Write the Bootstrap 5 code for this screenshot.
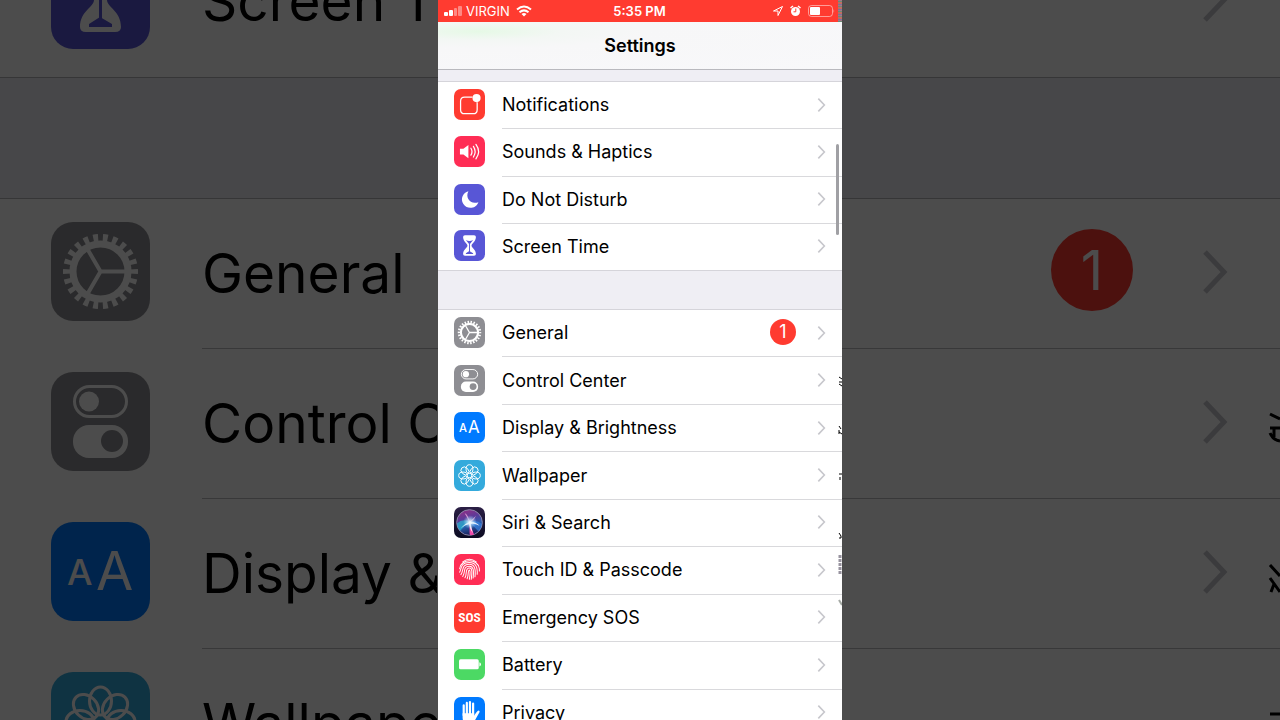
<!DOCTYPE html>
<html lang="en">
<head>
<meta charset="utf-8">
<meta name="viewport" content="width=device-width, initial-scale=1">
<title>Settings</title>
<link href="https://cdn.jsdelivr.net/npm/bootstrap@5.3.0/dist/css/bootstrap.min.css" rel="stylesheet">
<style>
  body { font-family: Inter, "Liberation Sans", sans-serif; background: #fff; color: #000; }
  .stage { height: 100vh; }

  /* Enlarged, dimmed list behind the phone */
  .backdrop { background: #fff; z-index: 0; }
  .backdrop::after { content: ""; position: absolute; inset: 0; background: rgba(0, 0, 0, .7); }
  .big-clip { height: 78px; }
  .big-gap { height: 121px; background: #efeef4; }
  .big-row { height: 150px; flex: none; padding-left: 51px; gap: 52px; }
  .big-row .tile { width: 99px; height: 99px; margin-bottom: 5px; }
  .big-body { border-bottom: 1px solid #bcbcc0; padding-right: 52px; gap: 69px; font-size: 55px; line-height: 68px; white-space: nowrap; }
  .big-label { max-width: calc(50vw - 405px); margin-bottom: 2px; }
  .big-edge { border-bottom: 1px solid #b4b4b8; }
  .big-edge .big-body { border-bottom: 0; }
  .big-row .chev { width: 26px; height: 44px; margin-bottom: 4px; }
  .big-badge { width: 82px; height: 82px; margin-bottom: 8px; background: #ff3b30; color: #fff; line-height: 82px; }

  /* Phone */
  .phone { max-width: 404px; z-index: 1; background: #fff; }
  .status { background: #ff3b30; color: #fff; height: 22px; font-size: 13px; line-height: 22px; padding: 0 2px 0 6px; }
  .status-icons { gap: 7px; padding-right: 5px; }
  .title-bar { height: 48px; background: radial-gradient(ellipse at 10% 20%, #e6f9e6 0, #f3f7f4 16%, #f7f7f8 32%, #f8f8fa 100%); border-bottom: 1px solid #b9b9be; }
  .title-bar h1 { font-size: 18px; line-height: 24px; font-weight: 600; }
  .spacer-sm { height: 11px; background: #efeef4; flex: none; }
  .spacer-lg { height: 38px; background: #efeef4; flex: none; }
  .rows { display: grid; grid-auto-rows: 1fr; flex: none; border-top: 1px solid #d5d4da; }
  .rows-top { height: 190px; }
  .rows-main { height: 428px; }
  .set-row { color: #000; padding-left: 16px; gap: 17px; }
  .set-row .tile { width: 31px; height: 31px; margin-bottom: 2px; }
  .set-body { border-bottom: 1px solid #d9d9dc; padding-right: 16px; gap: 21px; font-size: 18px; line-height: 24px; }
  .rows-top .set-row:last-child { border-bottom: 1px solid #d5d4da; }
  .rows-top .set-row:last-child .set-body { border-bottom: 0; }
  .chev { width: 9px; height: 14px; margin-bottom: 1px; fill: none; stroke: #c7c7cc; flex: none; }
  .tile { flex: none; }
  .count { width: 26px; height: 26px; margin-bottom: 2px; background: #ff3b30; color: #fff; font-size: 18px; line-height: 26px; }
  .thumb { right: 3px; top: 144px; width: 3px; height: 91px; background: #a0a0a4; border-radius: 2px; }
  .noise { right: 0; top: 0; width: 4px; height: 22px; background: repeating-linear-gradient(#a5758c 0 1px, #6d8c71 1px 2px, #c06d63 2px 4px, #7c739c 4px 5px); }
  .fray { right: 0; top: 370px; width: 4px; height: 240px; }
  .big-fray { right: 0; top: 400px; width: 12px; height: 320px; }
</style>
</head>
<body>
<svg class="position-absolute" width="0" height="0" aria-hidden="true">
  <defs>
    <linearGradient id="siriBg" x1="0" y1="0" x2="0" y2="1"><stop offset="0" stop-color="#2b1f45"/><stop offset="1" stop-color="#0b0b22"/></linearGradient>
    <linearGradient id="siriOrb" x1="0" y1="0" x2=".3" y2="1"><stop offset="0" stop-color="#a02a80"/><stop offset=".4" stop-color="#5d3a98"/><stop offset=".7" stop-color="#2a5fae"/><stop offset="1" stop-color="#1b2560"/></linearGradient>
    <radialGradient id="siriGlow"><stop offset="0" stop-color="#fff"/><stop offset=".35" stop-color="#d8f0ff" stop-opacity=".7"/><stop offset="1" stop-color="#9fd8ff" stop-opacity="0"/></radialGradient>
    <ellipse id="petal" cx="49.500" cy="29" rx="11" ry="14"/>
  </defs>
  <symbol id="chevron" viewBox="0 0 26 44"><path d="M3 2L22 22L3 42" stroke-width="5"/></symbol>
  <symbol id="notifications" viewBox="0 0 99 99">
    <rect width="99" height="99" rx="22" fill="#ff3b30"/>
    <path d="M59 26H34Q21 26 21 39V66Q21 79 34 79H61Q74 79 74 66V42" fill="none" stroke="#fff" stroke-width="4"/>
    <circle cx="72" cy="29" r="13" fill="#fff"/>
  </symbol>
  <symbol id="sounds" viewBox="0 0 99 99">
    <rect width="99" height="99" rx="22" fill="#ff2d55"/>
    <path d="M19 41H30L46 29V71L30 59H19Z" fill="#fff"/>
    <path d="M54 39Q61 50 54 61M62 33Q73 50 62 67M70 27Q87 50 70 73" fill="none" stroke="#fff" stroke-width="4" stroke-linecap="round"/>
  </symbol>
  <symbol id="moon" viewBox="0 0 99 99">
    <rect width="99" height="99" rx="22" fill="#5856d6"/>
    <path d="M46 23C35 42 52 68 78 58C70 79 43 83 30 64C19 46 29 28 46 23Z" fill="#fff"/>
  </symbol>
  <symbol id="hourglass" viewBox="0 0 99 99">
    <rect width="99" height="99" rx="22" fill="#5856d6"/>
    <path d="M35 17H64Q70 17 70 22C70 37 56 42 56 50C56 57 70 61 70 77Q70 82 64 82H35Q29 82 29 77C29 61 43 57 43 50C43 42 29 37 29 22Q29 17 35 17Z" fill="#fff"/>
    <path d="M49.500 41V72" stroke="#5856d6" stroke-width="3"/>
    <path d="M38 32Q49 38 61 32L51 45H48ZM49 67L61 74V77H38V74Z" fill="#5856d6"/>
  </symbol>
  <symbol id="general" viewBox="0 0 99 99">
    <rect width="99" height="99" rx="22" fill="#8e8e93"/>
    <g fill="none" stroke="#fff">
      <circle cx="49.500" cy="49.500" r="27.500" stroke-width="7"/>
      <circle cx="49.500" cy="49.500" r="33.500" stroke-width="8" pathLength="44" stroke-dasharray="1 1" stroke-dashoffset=".5"/>
      <path d="M75 49.500H49.500L37 28M49.500 49.500L37 71" stroke-width="4"/>
    </g>
  </symbol>
  <symbol id="control" viewBox="0 0 99 99">
    <rect width="99" height="99" rx="22" fill="#8e8e93"/>
    <rect x="23.500" y="14.500" width="52" height="30" rx="15" fill="none" stroke="#fff" stroke-width="3"/>
    <circle cx="38" cy="29.500" r="10" fill="#fff"/>
    <rect x="22" y="53" width="55" height="33" rx="16" fill="#fff"/>
    <circle cx="61" cy="69" r="11" fill="#8e8e93"/>
  </symbol>
  <symbol id="wallpaper" viewBox="0 0 99 99">
    <rect width="99" height="99" rx="22" fill="#34aadc"/>
    <g fill="none" stroke="#fff" stroke-width="3">
      <use href="#petal"/><use href="#petal" transform="rotate(45 49.5 49.5)"/><use href="#petal" transform="rotate(90 49.5 49.5)"/><use href="#petal" transform="rotate(135 49.5 49.5)"/>
      <use href="#petal" transform="rotate(180 49.5 49.5)"/><use href="#petal" transform="rotate(225 49.5 49.5)"/><use href="#petal" transform="rotate(270 49.5 49.5)"/><use href="#petal" transform="rotate(315 49.5 49.5)"/>
    </g>
  </symbol>
  <symbol id="siri" viewBox="0 0 99 99">
    <rect width="99" height="99" rx="22" fill="url(#siriBg)"/>
    <circle cx="49.500" cy="49.500" r="41" fill="url(#siriOrb)" stroke="#8f8aad" stroke-width="3"/>
    <path d="M10 52Q28 36 50 47Q30 64 20 76Q10 66 10 52Z" fill="#25c5d8" opacity=".6"/>
    <path d="M50 48Q72 40 89 54Q88 70 78 78Z" fill="#3b8df0" opacity=".6"/>
    <path d="M49 48L64 88Q53 92 50 88Z" fill="#ef4aa9"/>
    <path d="M50 48L34 20Q44 22 50 48L70 28Q64 44 50 48Z" fill="#f3a8dc" opacity=".8"/>
    <path d="M22 68Q38 49 52 47Q68 46 82 60Q66 52 54 54Q56 68 60 84Q50 70 48 55Q34 57 22 68Z" fill="#fff" opacity=".9"/>
    <circle cx="51" cy="48" r="22" fill="url(#siriGlow)"/>
  </symbol>
  <symbol id="touch" viewBox="0 0 99 99">
    <rect width="99" height="99" rx="22" fill="#ff2d55"/>
    <g fill="none" stroke="#fff" stroke-width="3.200" stroke-linecap="round">
      <path d="M28 25Q49 9 71 25"/>
      <path d="M18 47C22 13 77 13 81 47V54"/>
      <path d="M18 58C24 50 19 27 49 27C68 27 76 40 74 65"/>
      <path d="M22 66C32 53 22 33 49 33C66 33 70 48 67 73"/>
      <path d="M28 72C38 58 27 39 49 39C62 39 64 52 61 77"/>
      <path d="M35 76C43 62 34 45 49 45C59 45 58 58 55 81"/>
      <path d="M42 79C48 66 43 52 49 51C54 53 51 68 49 81"/>
    </g>
  </symbol>
  <symbol id="battery" viewBox="0 0 99 99">
    <rect width="99" height="99" rx="22" fill="#4cd964"/>
    <rect x="16" y="33" width="63" height="32" rx="5" fill="#fff"/>
    <path d="M81 42Q86 43 86 49Q86 55 81 56Z" fill="#fff"/>
  </symbol>
  <symbol id="privacy" viewBox="0 0 99 99">
    <rect width="99" height="99" rx="22" fill="#007aff"/>
    <path d="M31 27V58M41 19V55M51 16V55M61 21V58" stroke="#fff" stroke-width="7" stroke-linecap="round"/>
    <path d="M27.500 52H64.500V60Q72 45 79 43Q84 45 80 51L66 76Q61 86 48 86Q28 86 27.500 66Z" fill="#fff"/>
  </symbol>
</svg>

<div class="stage position-relative overflow-hidden">
  <div class="backdrop position-absolute top-0 start-0 w-100 h-100 overflow-hidden" aria-hidden="true">
    <div class="big-clip big-edge d-flex flex-column justify-content-end overflow-hidden">
      <div class="big-row d-flex align-items-center">
        <svg class="tile"><use href="#hourglass"/></svg>
        <div class="big-body d-flex align-items-center flex-fill h-100"><span class="big-label me-auto overflow-hidden">Screen Time</span><svg class="chev"><use href="#chevron"/></svg></div>
      </div>
    </div>
    <div class="big-gap big-edge"></div>
    <div class="big-row d-flex align-items-center">
      <svg class="tile"><use href="#general"/></svg>
      <div class="big-body d-flex align-items-center flex-fill h-100"><span class="big-label me-auto overflow-hidden">General</span><span class="big-badge rounded-circle text-center">1</span><svg class="chev"><use href="#chevron"/></svg></div>
    </div>
    <div class="big-row d-flex align-items-center">
      <svg class="tile"><use href="#control"/></svg>
      <div class="big-body d-flex align-items-center flex-fill h-100"><span class="big-label me-auto overflow-hidden">Control Center</span><svg class="chev"><use href="#chevron"/></svg></div>
    </div>
    <div class="big-row d-flex align-items-center">
      <svg class="tile" viewBox="0 0 99 99"><rect width="99" height="99" rx="22" fill="#007aff"/><text x="16" y="63" fill="#fff" font-size="36" font-weight="500">A</text><text x="45" y="68" fill="#fff" font-size="54" font-weight="400">A</text></svg>
      <div class="big-body d-flex align-items-center flex-fill h-100"><span class="big-label me-auto overflow-hidden">Display &amp; Brightness</span><svg class="chev"><use href="#chevron"/></svg></div>
    </div>
    <div class="big-row d-flex align-items-center">
      <svg class="tile"><use href="#wallpaper"/></svg>
      <div class="big-body d-flex align-items-center flex-fill h-100"><span class="big-label me-auto overflow-hidden">Wallpaper</span></div>
    </div>
    <svg class="big-fray position-absolute" viewBox="0 0 12 320" fill="none" stroke="#000" stroke-width="3"><path d="M2 14L12 19M2 28H12M2 33Q5 40 12 41M6 28V37M2 165L12 176M2 178L12 192M3 192L6 184M2 314H12"/></svg>
  </div>

  <main class="phone position-relative mx-auto h-100 w-100 d-flex flex-column overflow-hidden">
    <div class="status row g-0 flex-shrink-0 align-items-center">
      <div class="col d-flex align-items-center gap-1">
        <svg width="18" height="12" viewBox="0 0 18 12" fill="#fff"><rect y="7" width="4" height="4" rx="1"/><rect x="5" y="5" width="4" height="6" rx="1"/><g opacity=".4"><rect x="10" y="3" width="3" height="8" rx="1"/><rect x="14" y="1" width="4" height="10" rx="1"/></g></svg>
        <span>VIRGIN</span>
        <svg width="20" height="12" viewBox="-2 0 20 12" fill="none" stroke="#fff" stroke-width="2"><path d="M1 4.500Q8-1.500 15 4.500M3.500 7.200Q8 3.500 12.500 7.200"/><path d="M5.500 9Q8 7 10.500 9L8 11.500Z" fill="#fff" stroke="none"/></svg>
      </div>
      <div class="col-auto fw-semibold">5:35 PM</div>
      <div class="status-icons col d-flex align-items-center justify-content-end">
        <svg width="10" height="10" viewBox="0 0 10 10" fill="none" stroke="#fff" stroke-linejoin="round"><path d="M9.500 .500L.500 5H5V9.500Z"/></svg>
        <svg width="11" height="12" viewBox="0 0 11 12"><circle cx="5.500" cy="6.500" r="4.500" fill="#fff"/><path d="M.500 3L3 1M10.500 3L8 1" stroke="#fff" stroke-width="1.500"/><path d="M5.800 3.500V6.800H3.500" fill="none" stroke="#ff3b30"/></svg>
        <svg width="27" height="13" viewBox="0 0 27 13"><rect x=".500" y=".500" width="24" height="11" rx="3" fill="none" stroke="#fff" stroke-opacity=".5"/><rect x="2" y="2" width="10" height="8" rx="1" fill="#fff"/><path d="M25.500 4Q27 6 25.500 8Z" fill="#fff" opacity=".5"/></svg>
      </div>
    </div>
    <header class="title-bar flex-shrink-0 d-flex align-items-center justify-content-center"><h1 class="m-0">Settings</h1></header>
    <div class="spacer-sm"></div>
    <nav class="rows rows-top" aria-label="Alerts">
      <a href="#" class="set-row d-flex align-items-center text-decoration-none"><svg class="tile"><use href="#notifications"/></svg><span class="set-body d-flex align-items-center flex-fill h-100"><span class="me-auto">Notifications</span><svg class="chev"><use href="#chevron"/></svg></span></a>
      <a href="#" class="set-row d-flex align-items-center text-decoration-none"><svg class="tile"><use href="#sounds"/></svg><span class="set-body d-flex align-items-center flex-fill h-100"><span class="me-auto">Sounds &amp; Haptics</span><svg class="chev"><use href="#chevron"/></svg></span></a>
      <a href="#" class="set-row d-flex align-items-center text-decoration-none"><svg class="tile"><use href="#moon"/></svg><span class="set-body d-flex align-items-center flex-fill h-100"><span class="me-auto">Do Not Disturb</span><svg class="chev"><use href="#chevron"/></svg></span></a>
      <a href="#" class="set-row d-flex align-items-center text-decoration-none"><svg class="tile"><use href="#hourglass"/></svg><span class="set-body d-flex align-items-center flex-fill h-100"><span class="me-auto">Screen Time</span><svg class="chev"><use href="#chevron"/></svg></span></a>
    </nav>
    <div class="spacer-lg"></div>
    <nav class="rows rows-main" aria-label="Device">
      <a href="#" class="set-row d-flex align-items-center text-decoration-none"><svg class="tile"><use href="#general"/></svg><span class="set-body d-flex align-items-center flex-fill h-100"><span class="me-auto">General</span><span class="count rounded-circle text-center">1</span><svg class="chev"><use href="#chevron"/></svg></span></a>
      <a href="#" class="set-row d-flex align-items-center text-decoration-none"><svg class="tile"><use href="#control"/></svg><span class="set-body d-flex align-items-center flex-fill h-100"><span class="me-auto">Control Center</span><svg class="chev"><use href="#chevron"/></svg></span></a>
      <a href="#" class="set-row d-flex align-items-center text-decoration-none"><svg class="tile" viewBox="0 0 99 99"><rect width="99" height="99" rx="22" fill="#007aff"/><text x="16" y="63" fill="#fff" font-size="36" font-weight="500">A</text><text x="45" y="68" fill="#fff" font-size="54" font-weight="400">A</text></svg><span class="set-body d-flex align-items-center flex-fill h-100"><span class="me-auto">Display &amp; Brightness</span><svg class="chev"><use href="#chevron"/></svg></span></a>
      <a href="#" class="set-row d-flex align-items-center text-decoration-none"><svg class="tile"><use href="#wallpaper"/></svg><span class="set-body d-flex align-items-center flex-fill h-100"><span class="me-auto">Wallpaper</span><svg class="chev"><use href="#chevron"/></svg></span></a>
      <a href="#" class="set-row d-flex align-items-center text-decoration-none"><svg class="tile"><use href="#siri"/></svg><span class="set-body d-flex align-items-center flex-fill h-100"><span class="me-auto">Siri &amp; Search</span><svg class="chev"><use href="#chevron"/></svg></span></a>
      <a href="#" class="set-row d-flex align-items-center text-decoration-none"><svg class="tile"><use href="#touch"/></svg><span class="set-body d-flex align-items-center flex-fill h-100"><span class="me-auto">Touch ID &amp; Passcode</span><svg class="chev"><use href="#chevron"/></svg></span></a>
      <a href="#" class="set-row d-flex align-items-center text-decoration-none"><svg class="tile" viewBox="0 0 99 99"><rect width="99" height="99" rx="22" fill="#ff3b30"/><text x="49.500" y="65" text-anchor="middle" fill="#fff" font-family="'Roboto Condensed', 'Liberation Sans Narrow', Roboto, sans-serif" font-size="43" font-weight="700">SOS</text></svg><span class="set-body d-flex align-items-center flex-fill h-100"><span class="me-auto">Emergency SOS</span><svg class="chev"><use href="#chevron"/></svg></span></a>
      <a href="#" class="set-row d-flex align-items-center text-decoration-none"><svg class="tile"><use href="#battery"/></svg><span class="set-body d-flex align-items-center flex-fill h-100"><span class="me-auto">Battery</span><svg class="chev"><use href="#chevron"/></svg></span></a>
      <a href="#" class="set-row d-flex align-items-center text-decoration-none"><svg class="tile"><use href="#privacy"/></svg><span class="set-body d-flex align-items-center flex-fill h-100"><span class="me-auto">Privacy</span><svg class="chev"><use href="#chevron"/></svg></span></a>
    </nav>
    <div class="thumb position-absolute"></div>
    <div class="noise position-absolute"></div>
    <svg class="fray position-absolute" viewBox="0 0 4 240" fill="none" stroke="#000"><path d="M1 7L4 9M1 12H4M1 14L4 16M1 56L3 59M1 62L4 64M1 64V60M1 104H4M2 107V110M1 163L3 166V168H1"/><path d="M2 185V205" stroke="#98939f" stroke-width="3" stroke-dasharray="3 1"/><path d="M1 230L4 235" stroke="#a5aaa5" stroke-width="2"/></svg>
  </main>
</div>
<script src="https://cdn.jsdelivr.net/npm/bootstrap@5.3.0/dist/js/bootstrap.bundle.min.js"></script>
</body>
</html>
